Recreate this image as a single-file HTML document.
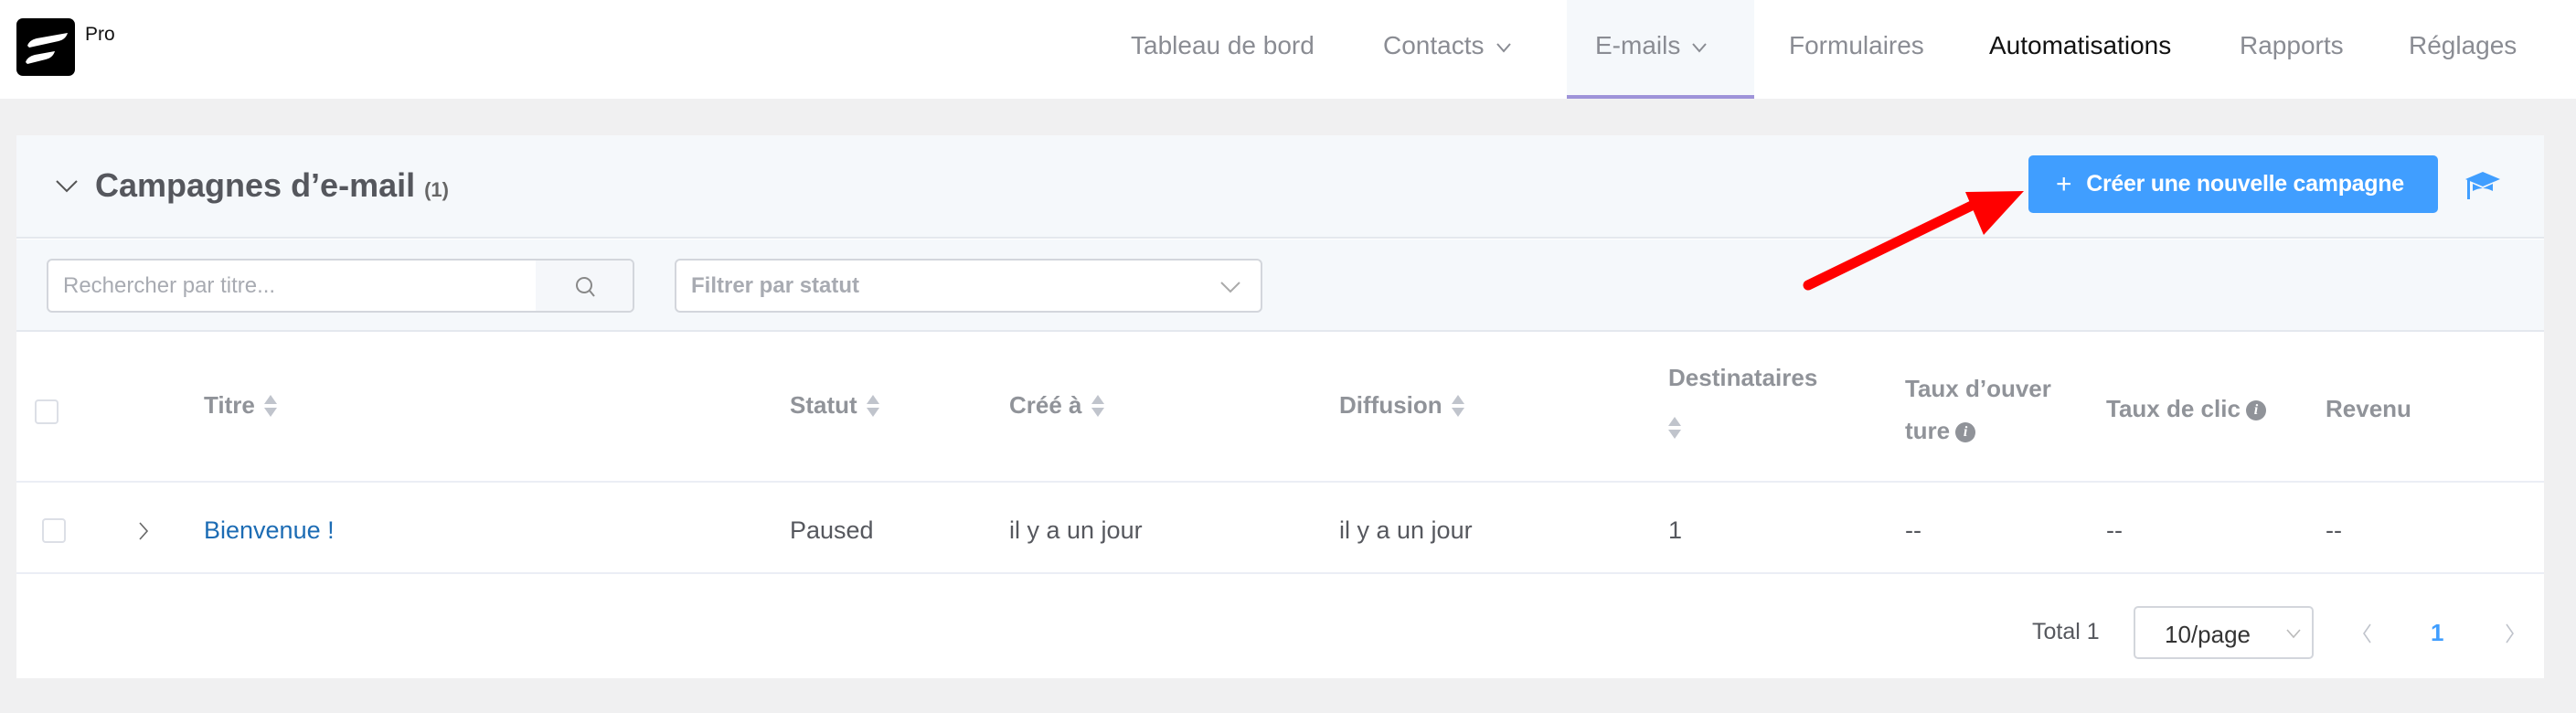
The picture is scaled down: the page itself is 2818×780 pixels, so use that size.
<!DOCTYPE html>
<html><head><meta charset="utf-8"><style>
*{margin:0;padding:0;box-sizing:border-box}
body{width:2818px;height:780px;background:#f0f0f1;font-family:"Liberation Sans",Arial,sans-serif;position:relative;overflow:hidden}
.a{position:absolute;white-space:nowrap}
.nav{font-size:28px;color:#8a8c93;top:34px;line-height:32px}
.nav svg{vertical-align:middle;margin-left:12px}
.th{font-size:26px;font-weight:bold;color:#909399;line-height:30px}
.td{font-size:27px;color:#56585e;line-height:30px;top:565px}
.sort{display:inline-block;vertical-align:middle;margin-left:10px;width:14px;height:26px;position:relative}
.sort:before{content:"";position:absolute;left:0;top:0;border:7px solid transparent;border-bottom:10px solid #c0c4cc;border-top:0}
.sort:after{content:"";position:absolute;left:0;top:14px;border:7px solid transparent;border-top:10px solid #c0c4cc;border-bottom:0}
.info{display:inline-block;width:22px;height:22px;border-radius:50%;background:#909399;color:#fff;font-size:16px;font-style:italic;text-align:center;line-height:22px;vertical-align:middle;margin-left:6px;font-family:"Liberation Serif",serif;font-weight:bold}
.cb{position:absolute;width:26px;height:27px;border:2px solid #dcdfe6;border-radius:4px;background:#fff}
</style></head><body>
<div class="a" style="left:0;top:0;width:2818px;height:108px;background:#fff"></div>
<div class="a" style="left:18px;top:20px;width:64px;height:63px;background:#000;border-radius:7px">
<svg width="64" height="63" viewBox="0 0 64 63"><path d="M12 30 Q14 24 22 22 L56 16 Q54 23 46 25 L14 32 Z M10 48 Q12 42 20 40 L42 36 Q40 43 32 45 L12 50 Z" fill="#fff"/></svg></div>
<div class="a" style="left:93px;top:26px;font-size:21px;color:#111">Pro</div>
<div class="a" style="left:1714px;top:0;width:205px;height:108px;background:#f5f8fb"></div>
<div class="a" style="left:1714px;top:104px;width:205px;height:4px;background:#9e93d9"></div>
<div class="a nav" style="left:1237px">Tableau de bord</div>
<div class="a nav" style="left:1513px">Contacts<svg width="18" height="12"><path d="M2 2 L9 10 L16 2" stroke="#8a8c93" stroke-width="2" fill="none"/></svg></div>
<div class="a nav" style="left:1745px">E-mails<svg width="18" height="12"><path d="M2 2 L9 10 L16 2" stroke="#8a8c93" stroke-width="2" fill="none"/></svg></div>
<div class="a nav" style="left:1957px">Formulaires</div>
<div class="a nav" style="left:2176px;color:#111">Automatisations</div>
<div class="a nav" style="left:2450px">Rapports</div>
<div class="a nav" style="left:2635px">Réglages</div>

<div class="a" style="left:18px;top:148px;width:2765px;height:594px;background:#fff"></div>
<div class="a" style="left:18px;top:148px;width:2765px;height:113px;background:#f5f8fb;border-bottom:2px solid #e4e8ee"></div>
<div class="a" style="left:18px;top:262px;width:2765px;height:101px;background:#f5f8fb;border-bottom:2px solid #e4e8ee"></div>
<svg class="a" style="left:60px;top:196px" width="26" height="16"><path d="M2 2 L13 13 L24 2" stroke="#555" stroke-width="2" fill="none"/></svg>
<div class="a" style="left:104px;top:182px;font-size:36px;font-weight:bold;color:#55575d">Campagnes d’e-mail <span style="font-size:22px;color:#666">(1)</span></div>
<div class="a" style="left:2219px;top:170px;width:448px;height:63px;background:#409eff;border-radius:5px;color:#fff;font-size:25px;line-height:63px;padding-left:30px;font-weight:bold;letter-spacing:-0.3px"><span style="font-size:30px;font-weight:normal;margin-right:16px;vertical-align:-2px">+</span>Créer une nouvelle campagne</div>
<svg class="a" style="left:2696px;top:186px" width="40" height="33" viewBox="0 0 40 33"><path d="M20 2 L39 10 L20 18 L1 10 Z" fill="#409eff"/><path d="M9 15 L9 23 Q20 17 31 23 L31 15 L20 20 Z" fill="#409eff"/><rect x="3" y="11" width="3" height="21" fill="#409eff"/></svg>
<svg class="a" style="left:1960px;top:195px" width="270" height="130"><line x1="18" y1="117" x2="205" y2="26" stroke="#f00" stroke-width="11" stroke-linecap="round"/><path d="M254 14 L190 15 L210 62 Z" fill="#f00"/></svg>

<div class="a" style="left:51px;top:283px;width:643px;height:59px;border:2px solid #d3d6dc;border-radius:6px;background:#fff;overflow:hidden">
<div class="a" style="left:533px;top:0;width:110px;height:59px;background:#f5f7fa"></div>
<div class="a" style="left:16px;top:14px;font-size:24px;color:#a8abb2">Rechercher par titre...</div>
<svg class="a" style="left:576px;top:16px" width="24" height="26"><circle cx="10" cy="11" r="8" stroke="#888" stroke-width="2" fill="none"/><line x1="16" y1="17" x2="21" y2="23" stroke="#888" stroke-width="2"/></svg></div>
<div class="a" style="left:738px;top:283px;width:643px;height:59px;border:2px solid #d3d6dc;border-radius:6px;background:#fff">
<div class="a" style="left:16px;top:14px;font-size:24px;font-weight:bold;color:#a8abb2">Filtrer par statut</div>
<svg class="a" style="left:594px;top:22px" width="24" height="14"><path d="M2 2 L12 12 L22 2" stroke="#aaa" stroke-width="2" fill="none"/></svg></div>

<div class="cb" style="left:38px;top:437px"></div>
<div class="a th" style="left:223px;top:428px">Titre<span class="sort"></span></div>
<div class="a th" style="left:864px;top:428px">Statut<span class="sort"></span></div>
<div class="a th" style="left:1104px;top:428px">Créé à<span class="sort"></span></div>
<div class="a th" style="left:1465px;top:428px">Diffusion<span class="sort"></span></div>
<div class="a th" style="left:1825px;top:398px">Destinataires</div>
<div class="a th" style="left:1815px;top:452px"><span class="sort"></span></div>
<div class="a th" style="left:2084px;top:410px">Taux d’ouver</div>
<div class="a th" style="left:2084px;top:456px">ture<span class="info">i</span></div>
<div class="a th" style="left:2304px;top:432px">Taux de clic<span class="info">i</span></div>
<div class="a th" style="left:2544px;top:432px">Revenu</div>
<div class="a" style="left:18px;top:526px;width:2765px;height:2px;background:#ebeef5"></div>

<div class="cb" style="left:46px;top:567px"></div>
<svg class="a" style="left:150px;top:570px" width="14" height="22"><path d="M3 2 L11 11 L3 20" stroke="#666" stroke-width="1.6" fill="none"/></svg>
<div class="a td" style="left:223px;color:#1c6cb4">Bienvenue !</div>
<div class="a td" style="left:864px">Paused</div>
<div class="a td" style="left:1104px">il y a un jour</div>
<div class="a td" style="left:1465px">il y a un jour</div>
<div class="a td" style="left:1825px">1</div>
<div class="a td" style="left:2084px">--</div>
<div class="a td" style="left:2304px">--</div>
<div class="a td" style="left:2544px">--</div>
<div class="a" style="left:18px;top:626px;width:2765px;height:2px;background:#ebeef5"></div>

<div class="a" style="left:2223px;top:677px;font-size:25px;color:#56585e">Total 1</div>
<div class="a" style="left:2334px;top:663px;width:197px;height:58px;border:2px solid #d3d6dc;border-radius:5px;background:#fff">
<div class="a" style="left:32px;top:14px;font-size:26px;color:#333">10/page</div>
<svg class="a" style="left:164px;top:22px" width="18" height="12"><path d="M2 2 L9 10 L16 2" stroke="#bbb" stroke-width="1.6" fill="none"/></svg></div>
<svg class="a" style="left:2583px;top:681px" width="12" height="24"><path d="M10 2 L3 12 L10 22" stroke="#c0c4cc" stroke-width="1.6" fill="none"/></svg>
<div class="a" style="left:2659px;top:677px;font-size:26px;font-weight:bold;color:#409eff">1</div>
<svg class="a" style="left:2740px;top:681px" width="12" height="24"><path d="M2 2 L9 12 L2 22" stroke="#c0c4cc" stroke-width="1.6" fill="none"/></svg>
</body></html>
